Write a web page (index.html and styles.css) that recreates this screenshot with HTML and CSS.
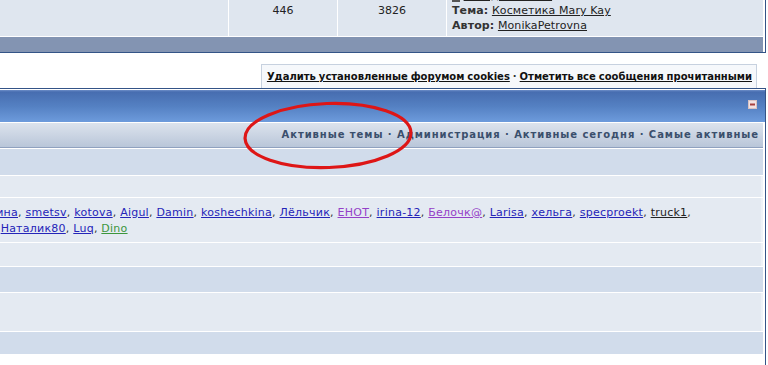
FILE: index.html
```html
<!DOCTYPE html>
<html lang="ru">
<head>
    <meta charset="UTF-8">
    <title>Форум - статистика</title>
    <link rel="stylesheet" href="styles.css">
</head>
<body>
    <div class="page">
        <!-- last forum row -->
        <div class="tableborder topic-table">
            <div class="topic-row">
                <div class="cell"></div>
                <div class="cell num">446</div>
                <div class="cell num">3826</div>
                <div class="cell lastpost">
                    <div><span class="lp-icon"></span> <a href="#">Сегодня, 14:32</a></div>
                    <div><b>Тема:</b> <a href="#">Косметика Mary Kay</a></div>
                    <div><b>Автор:</b> <a href="#">MonikaPetrovna</a></div>
                </div>
            </div>
            <div class="catend"></div>
        </div>

        <div class="board-links">
            <div class="links-box">
                <a href="#">Удалить установленные форумом cookies</a> · <a href="#">Отметить все сообщения прочитанными</a>
            </div>
        </div>

        <!-- board stats -->
        <div class="tableborder stats">
            <div class="maintitle">
                <svg class="toggle" width="9" height="9" viewBox="0 0 9 9">
                    <rect x="0.5" y="0.5" width="8" height="8" fill="#f2e2e2" stroke="#d8c2c2"/>
                    <rect x="2" y="3.5" width="5" height="2" fill="#a8403f"/>
                </svg>
            </div>
            <div class="subtitle">Активные темы · Администрация · Активные сегодня · Самые активные</div>
            <div class="row row2 h26"></div>
            <div class="row row1 h21"></div>
            <div class="row row1 names">
                <div class="line"><a href="#" class="m">Алёна</a>, <a href="#" class="m">vika77</a>, <a href="#" class="m">Таня_К</a>, <a href="#" class="m">Ольга Н.</a>, <a href="#" class="m">Марина</a>, <a href="#" class="m">smetsv</a>, <a href="#" class="m">kotova</a>, <a href="#" class="m">Aigul</a>, <a href="#" class="m">Damin</a>, <a href="#" class="m">koshechkina</a>, <a href="#" class="m">Лёльчик</a>, <a href="#" class="v">ЕНОТ</a>, <a href="#" class="m">irina-12</a>, <a href="#" class="v">Белочк@</a>, <a href="#" class="m">Larisa</a>, <a href="#" class="m">хельга</a>, <a href="#" class="m">specproekt</a>, <a href="#" class="d">truck1</a>,</div>
                <div class="line"><a href="#" class="m">olga_s</a>, <a href="#" class="m">Ксения</a>, <a href="#" class="m">Лариса77</a>, <a href="#" class="m">Tanya</a>, <a href="#" class="m">Ян.</a>, <a href="#" class="m">Наталик80</a>, <a href="#" class="m">Luq</a>, <a href="#" class="g">Dino</a></div>
            </div>
            <div class="row row1 h23"></div>
            <div class="row row2 h25"></div>
            <div class="row row1 h38"></div>
            <div class="row row2 h22"></div>
            <div class="row h20"></div>
        </div>
    </div>

    <svg class="mark" width="180" height="75" viewBox="0 0 180 75">
        <ellipse cx="88" cy="35.5" rx="83" ry="32" transform="rotate(-2 88 35.5)" fill="none" stroke="#de1616" stroke-width="3.2"/>
    </svg>
</body>
</html>
```

FILE: styles.css
```css
* { margin: 0; padding: 0; box-sizing: border-box; }
body { font-family: "DejaVu Sans", Verdana, sans-serif; font-size: 11px; color: #000; background: #fff; overflow: hidden; }
a { color: #222; }

.page { width: 1006px; margin: -17px 0 0 -240px; }
.tableborder { background: #fff; border: 1px solid #345487; }

/* Last forum row */
.topic-table { padding-right: 2px; }
.topic-row { display: grid; grid-template-columns: 1fr 108px 108px 316px; column-gap: 1px; }
.cell { background: #dfe6ef; }
.num { display: flex; align-items: center; justify-content: center; color: #222; }
.lastpost { padding: 4px 5px 3px; line-height: 15px; color: #333; letter-spacing: 0.1px; }
.lp-icon { display: inline-block; width: 8px; height: 9px; background: #555; vertical-align: -3px; }
.catend { height: 15px; margin-top: 1px; background: #8394b2; }

/* Cookies / mark read links */
.board-links { display: flex; justify-content: flex-end; padding: 11px 9px 0 0; }
.links-box { border: 1px solid #c7d1df; border-bottom: none; background: #f6f8fb; padding: 4px 4px 4px 5px; line-height: 15px; font-size: 10px; font-weight: bold; word-spacing: -0.5px; color: #333; }
.links-box a { color: #111; }

/* Board stats */
.stats { padding-top: 1px; display: flex; flex-direction: column; gap: 1px; }
.maintitle { height: 32px; display: flex; justify-content: flex-end; align-items: flex-start; padding: 10px 8px 0 0; background: linear-gradient(#6d8ec8 0, #476db0 2px, #5480c2 50%, #6d9bdc 100%); }
.subtitle { height: 25px; margin-right: 2px; padding-right: 4px; background: linear-gradient(#dce3ed, #b9c6d9); border-bottom: 1px solid #8fa1bf; text-align: right; line-height: 24px; font-size: 10px; font-weight: bold; letter-spacing: 0.94px; color: #3a4f6c; }
.row { margin-right: 2px; }
.row1 { background: #e4eaf2; border-right: 2px solid #eef2f7; }
.row2 { background: #d1dceb; }
.h20 { height: 20px; }
.h21 { height: 21px; }
.h22 { height: 22px; }
.h23 { height: 23px; }
.h25 { height: 25px; }
.h26 { height: 26px; }
.h38 { height: 38px; }

.names { height: 44px; padding: 7px 0 5px 13px; line-height: 16px; letter-spacing: 0.24px; color: #333; }
.names .line { white-space: nowrap; }
.names .m { color: #2424b8; }
.names .v { color: #9440c8; }
.names .g { color: #3c963c; }
.names .d { color: #222; }

/* red hand-drawn marker over the stats links */
.mark { position: absolute; left: 240px; top: 100px; }
```
